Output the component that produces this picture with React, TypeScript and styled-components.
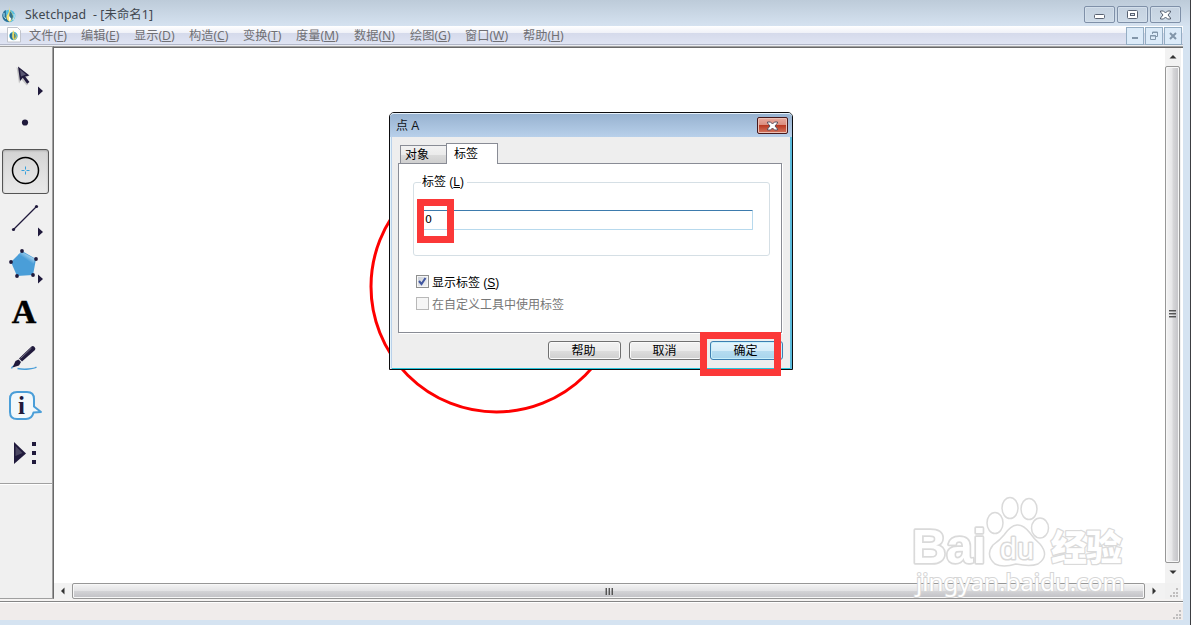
import { useState } from "react";
import type { ReactNode } from "react";
import styled, { createGlobalStyle, css } from "styled-components";

const GlobalStyle = createGlobalStyle`
  * {
    box-sizing: border-box;
  }

  body {
    margin: 0;
    overflow: hidden;
    font-family: "Liberation Sans", "Noto Sans CJK SC", sans-serif;
    font-size: 12px;
  }

  u {
    text-underline-offset: 1px;
    text-decoration-thickness: 1px;
  }
`;

const Window = styled.div`
  width: 1191px;
  height: 625px;
  display: flex;
  flex-direction: column;
  background: #d5e3f1;
  border-right: 1px solid #3c3e42;
`;

const TitleBar = styled.header`
  height: 26px;
  flex: none;
  display: flex;
  align-items: flex-start;
  padding: 6px 9px 0 1px;
  background: linear-gradient(#bdcbd9, #d5e2f0);
`;

const Title = styled.h1`
  flex: 1;
  margin: 0 0 0 8px;
  font: 12.3px/17px "Noto Sans", "Noto Sans CJK SC", sans-serif;
  letter-spacing: 0.12px;
  white-space: pre;
  color: #3f464e;
`;

const WindowButtons = styled.div`
  display: flex;
  gap: 2px;
`;

const WindowButton = styled.button`
  width: 31px;
  height: 17px;
  padding: 0;
  display: grid;
  place-items: center;
  border: 1px solid #7f90a8;
  border-radius: 2px;
  background: linear-gradient(#c5d2e0, #cddae7);
  box-shadow: inset 0 0 0 1px #d3dfeb;
`;

const MenuBar = styled.nav`
  width: 1183px;
  height: 19px;
  flex: none;
  display: flex;
  align-items: flex-start;
  padding: 1px 1px 0 7px;
  border-bottom: 1px solid #b2b7c8;
  background: linear-gradient(#fff 0, #eff1f8 7px, #d5daeb 7px, #dfe4f3 18px);
`;

const MenuItems = styled.div`
  flex: 1;
  display: flex;
  margin-left: 8px;
`;

const MenuItem = styled.span<{ $width: number }>`
  width: ${({ $width }) => $width}px;
  font: 12.2px/17px "Noto Sans", "Noto Sans CJK SC", sans-serif;
  white-space: nowrap;
  color: #707074;
`;

const DocButtons = styled.div`
  display: flex;
  gap: 1px;
`;

const DocButton = styled.button`
  width: 18px;
  height: 18px;
  padding: 0;
  display: grid;
  place-items: center;
  border: 1px solid #94adc3;
  background: #dcebf9;
`;

const Main = styled.div`
  width: 1183px;
  height: 554px;
  flex: none;
  display: flex;
  border-top: 1px solid #eceef2;
  background: #f0f0f0;
`;

const Toolbar = styled.aside`
  width: 54px;
  flex: none;
  display: flex;
  flex-direction: column;
  border-top: 1px solid #a0a0a0;
  border-right: 1px solid #696969;
  border-bottom: 1px solid #a0a0a0;
  height: 553px;
  box-shadow: inset -1px 0 #a0a0a0;
`;

const ToolList = styled.div`
  padding: 8px 0 0 2px;
  height: 437px;
  margin-right: 1px;
  border-bottom: 1px solid #a0a0a0;
  box-shadow: 0 1px #fff;
`;

const Tool = styled.button<{ $active?: boolean }>`
  display: block;
  width: 47px;
  height: 47px;
  padding: 0;
  border: 0;
  background: none;
  ${({ $active }) =>
    $active &&
    css`
      height: 45px;
      margin-bottom: 2px;
      border: 1px solid #555;
      border-radius: 3px;
      background: linear-gradient(#d3d3d3, #dedede 45%, #e9e9e9);
      box-shadow: inset 0 1px 2px #aaa;

      svg {
        margin: -2px 0 0 -1px;
      }
    `}

  svg {
    display: block;
  }
`;

const Document = styled.main`
  flex: 1;
  display: grid;
  grid-template: 535px 16px / 1111px 16px;
  height: 553px;
  border-top: 1px solid #a0a0a0;
  box-shadow: inset 0 1px #696969;
  padding-top: 1px;
  background: #fff;
`;

const Canvas = styled.section`
  position: relative;
  background: #fff;
`;

const Drawing = styled.svg`
  display: block;
`;

const Scrollbar = styled.div<{ $vertical?: boolean }>`
  display: flex;
  flex-direction: ${({ $vertical }) => ($vertical ? "column" : "row")};
  background: #f2f2f2;
`;

const Arrow = styled.div<{ $vertical?: boolean }>`
  width: ${({ $vertical }) => ($vertical ? 16 : 18)}px;
  height: ${({ $vertical }) => ($vertical ? 18 : 16)}px;
  flex: none;
  display: grid;
  place-items: center;
`;

const Thumb = styled.div<{ $vertical?: boolean }>`
  flex: none;
  display: grid;
  place-items: center;
  border: 1px solid #979797;
  border-radius: 2px;
  box-shadow: inset 0 0 0 1px #f7f7f7;
  ${({ $vertical }) =>
    $vertical
      ? css`
          width: 15px;
          height: 497px;
          background: linear-gradient(90deg, #f4f4f4, #e6e6e8 48%, #d8d8da 52%, #c2c2c6);
        `
      : css`
          width: 1073px;
          height: 16px;
          background: linear-gradient(#f4f4f4, #e3e3e5 48%, #d3d3d6 52%, #c0c0c4);
        `}
`;

const GripCorner = styled.div`
  display: flex;
  align-items: flex-end;
  justify-content: flex-end;
  padding: 0 2px 1px 0;
  background: #f0f0f0;
`;

const StatusBar = styled.footer`
  width: 1183px;
  height: 21px;
  flex: none;
  display: flex;
  justify-content: flex-end;
  align-items: flex-end;
  padding: 0 1px;
  background: #f0eceb;
  border-top: 2px solid #f5f3f2;
  box-shadow: inset 0 1px #858585, inset 0 2px #fff;
`;

// The dialog floats over the drawing.
const Dialog = styled.div`
  position: absolute;
  left: 335px;
  top: 64px;
  width: 404px;
  height: 258px;
  display: flex;
  flex-direction: column;
  border: 1px solid #0d0d0f;
  border-radius: 5px 5px 0 0;
  background: #eee;
  box-shadow: inset 1px 0 #e4f3fb, inset 2px 0 #b9d1ea, inset -2px 0 #5bbbdc,
    inset 0 -1px #28c4da;
`;

const DialogTitle = styled.div`
  height: 24px;
  flex: none;
  display: flex;
  justify-content: space-between;
  padding: 4px 4px 0 6px;
  border-top: 1px solid #e7f2fb;
  border-radius: 4px 4px 0 0;
  background: linear-gradient(#97b2d0, #b8d0ea);
  line-height: 17px;
  color: #101418;
`;

const CloseButton = styled.button`
  width: 31px;
  height: 17px;
  padding: 0;
  margin-top: -1px;
  display: grid;
  place-items: center;
  border: 1px solid #47191c;
  border-radius: 2px;
  background: linear-gradient(#e8aa9e, #da8c7d 48%, #ba3a22 50%, #d37660);
  box-shadow: inset 0 0 0 1px #ecc0b5;
`;

const Tabs = styled.div`
  display: flex;
  align-items: flex-end;
  height: 26px;
  padding-left: 10px;
  flex: none;
`;

const Tab = styled.button<{ $active?: boolean }>`
  width: 46px;
  height: 18px;
  padding: 0 0 0 4px;
  border: 1px solid #898c95;
  border-right: 0;
  border-bottom: 0;
  background: linear-gradient(#f2f2f2, #ebebeb 50%, #dadada 55%, #cfcfcf);
  font: 12px/18px "Liberation Sans", "Noto Sans CJK SC", sans-serif;
  text-align: left;
  color: #000;
  ${({ $active }) =>
    $active &&
    css`
      position: relative;
      z-index: 1;
      width: 52px;
      height: 21px;
      margin-bottom: -1px;
      padding: 0 0 1px 7px;
      border-right: 1px solid #898c95;
      background: #fff;
    `}
`;

const Panel = styled.div`
  width: 384px;
  height: 170px;
  margin-left: 8px;
  flex: none;
  border: 1px solid #898c95;
  background: #fff;
  padding: 9px 11px 0 14px;
  box-shadow: 1px 1px #fff;
`;

const Group = styled.fieldset`
  width: 357px;
  height: 83px;
  margin: 0;
  padding: 18px 16px 0 7px;
  border: 1px solid #d5dfe5;
  border-radius: 3px;
`;

const Legend = styled.legend`
  height: 18px;
  margin-bottom: -18px;
  padding: 0 3px 0 1px;
  line-height: 19px;
`;

const LabelInput = styled.input`
  display: block;
  width: 332px;
  height: 20px;
  margin-top: 18px;
  padding: 0 0 1px 3px;
  border: 1px solid #b7d9ed;
  border-top-color: #3d7bad;
  border-radius: 1px;
  font: 11px "DejaVu Sans", sans-serif;
  outline: none;
`;

const CheckRow = styled.label<{ $disabled?: boolean }>`
  height: 22px;
  display: flex;
  align-items: center;
  gap: 3px;
  margin-left: 3px;
  white-space: nowrap;
  color: ${({ $disabled }) => ($disabled ? "#777" : "#000")};
`;

const CheckBox = styled.span<{ $disabled?: boolean }>`
  width: 13px;
  height: 13px;
  display: grid;
  place-items: center;
  border: 1px solid ${({ $disabled }) => ($disabled ? "#b8b8b8" : "#8e8f8f")};
  background: ${({ $disabled }) =>
    $disabled ? "#f6f6f6" : "linear-gradient(135deg, #c9ced6, #f6f6f6)"};
  box-shadow: inset 0 0 0 1px #f6f6f6;
`;

const CheckRows = styled.div`
  margin-top: 14px;
`;

const Actions = styled.div`
  display: flex;
  gap: 8px;
  padding: 8px 0 0 158px;
`;

const ActionButton = styled.button<{ $primary?: boolean }>`
  width: 73px;
  height: 19px;
  padding: 0 2px 0 0;
  border: 1px solid ${({ $primary }) => ($primary ? "#3c7fb1" : "#707070")};
  border-radius: 3px;
  background: ${({ $primary }) =>
    $primary
      ? "linear-gradient(#e6f4fc, #d5edf9 50%, #b5dcf0 52%, #a8d5ec)"
      : "linear-gradient(#f2f2f2, #ebebeb 50%, #dddddd 52%, #cfcfcf)"};
  box-shadow: inset 0 0 0 1px ${({ $primary }) => ($primary ? "#c8f0fb" : "#fafafa")};
  font: 12px/16px "Liberation Sans", "Noto Sans CJK SC", sans-serif;
  color: #000;
`;

const Highlight = styled.div<{ $x: number; $y: number; $w: number }>`
  position: absolute;
  left: ${({ $x }) => $x}px;
  top: ${({ $y }) => $y}px;
  width: ${({ $w }) => $w}px;
  height: 44px;
  border: 7px solid #fb3838;
  pointer-events: none;
`;

const Watermark = styled.svg`
  position: absolute;
  left: 855px;
  top: 444px;
  z-index: 2;
  overflow: visible;
  pointer-events: none;
`;

const menus = [
  { name: "文件", key: "F", width: 52 },
  { name: "编辑", key: "E", width: 53 },
  { name: "显示", key: "D", width: 55 },
  { name: "构造", key: "C", width: 54 },
  { name: "变换", key: "T", width: 53 },
  { name: "度量", key: "M", width: 58 },
  { name: "数据", key: "N", width: 56 },
  { name: "绘图", key: "G", width: 55 },
  { name: "窗口", key: "W", width: 58 },
  { name: "帮助", key: "H", width: 45 },
];

const ink = "#201a3c";
const blue = "#4a9ed8";

const AppIcon = () => (
  <svg width="16" height="17" viewBox="0 0 16 17">
    <circle cx="8" cy="10" r="6.300" fill="#58bfe0" />
    <path d="M3 5Q-1 11 4 15Q8 17 10 15Q4 12 5 4Z" fill="#2b6f96" />
    <path d="M8 0Q8 4 11 7Q14 12 9 16Q5 14 5.500 10Q9 6 8 0Z" fill="#f3e27a" />
    <path d="M9 5Q14 10 10.500 14Q7 13 9 5Z" fill="#35748c" />
    <path d="M8 10l2.500 3L8 15Z" fill="#fff" />
    <path d="M3 7Q2 11 5 13" fill="none" stroke="#b5e8f4" />
    <path d="M13 8Q14 11 12 14" fill="none" stroke="#c8eef6" />
  </svg>
);

const DocIcon = () => (
  <svg width="14" height="16" viewBox="0 0 14 16">
    <path d="M.5.5h10l3 3v11.500H.5Z" fill="#fff" stroke="#c1c4cc" />
    <circle cx="6.500" cy="9" r="4.200" fill="#4fb2d2" />
    <path d="M6 3Q7 6 9 8Q11 11 7 13Q4 12 6 3Z" fill="#ead65a" />
    <path d="M7 6Q10 9 7.500 12Z" fill="#2f7190" />
    <path d="M3 7Q2 11 6 13Q4 10 5 6Z" fill="#2b6a90" />
  </svg>
);

const Flyout = () => <path d="M36 31.500l5 4.500-5 4.500Z" fill={ink} />;

const ToolIcon = ({ children }: { children: ReactNode }) => (
  <svg width="47" height="47" viewBox="0 0 47 47" overflow="visible">
    {children}
  </svg>
);

const tools = [
  {
    name: "arrow",
    icon: (
      <>
        <path
          d="M14.500 12l12 10-4 1 4 6-2 1.500-5-6-2.500 4Z"
          fill="#777"
          opacity=".35"
        />
        <path d="M16 11.500l11.500 9-4.300 1 4.300 5.500-2.400 1.800-4.300-6-2.800 3.200Z" fill={ink} />
        <path d="M18 14.500l6 5-2.500 1-2.500 1Z" fill="#595772" />
        <Flyout />
      </>
    ),
  },
  { name: "point", icon: <circle cx="23" cy="20.500" r="3.100" fill={ink} /> },
  {
    name: "compass",
    icon: (
      <>
        <circle cx="23.500" cy="22.500" r="13" fill="none" stroke="#000" strokeWidth="1.500" />
        <path d="M19.500 22.500h3m2 0h3M23.500 18.500v3m0 2v3" stroke="#35a0dc" />
      </>
    ),
  },
  {
    name: "line",
    icon: (
      <>
        <path d="M11.500 33.500l23-23" stroke={ink} strokeWidth="1.200" />
        <circle cx="11.500" cy="33.500" r="1.600" fill={ink} />
        <circle cx="34.500" cy="10.500" r="1.600" fill={ink} />
        <Flyout />
      </>
    ),
  },
  {
    name: "polygon",
    icon: (
      <>
        <defs>
          <linearGradient id="shine" x1="0.35" y1="0.6" x2="0.75" y2="0.1">
            <stop offset="0.2" stopColor={blue} />
            <stop offset="1" stopColor="#cfe9f7" />
          </linearGradient>
        </defs>
        <path d="M20 8l14 8-3 16-16 1-6-14Z" fill={blue} />
        <path d="M20 9l13 7-2 7Q27 17 16 12Z" fill="url(#shine)" />
        {[
          [20, 8],
          [34, 16],
          [31, 32],
          [15, 33],
          [9, 19],
        ].map(([x, y]) => (
          <circle key={x} cx={x} cy={y} r="1.900" fill={ink} />
        ))}
        <Flyout />
      </>
    ),
  },
  {
    name: "text",
    icon: (
      <text
        x="22"
        y="32.500"
        textAnchor="middle"
        fontFamily="Liberation Serif"
        fontWeight="bold"
        fontSize="34"
        stroke="#000"
        strokeWidth=".5"
      >
        A
      </text>
    ),
  },
  {
    name: "marker",
    icon: (
      <>
        <path
          d="M9.500 31.500q1-3 3-2m3 2q5 1 11 .5t8-2"
          fill="none"
          stroke={blue}
          strokeWidth="1.500"
        />
        <path d="M10.500 30.500l3-6.500 3-1.500 2.500 2.500-2 3.500Z" fill={ink} />
        <path d="M17 21.500L29.500 9.500q1.500-1 3 .5t.5 3L20 24.500Z" fill={ink} />
        <path d="M18.500 21.500l11-10.500" stroke="#777486" />
      </>
    ),
  },
  {
    name: "information",
    icon: (
      <>
        <path
          d="M15 8h10q7 0 7 7v7.500l7 5.500-7.500.5Q30 35 24 35h-9q-7 0-7-7V15q0-7 7-7Z"
          fill="#f2f8fb"
          stroke={blue}
          strokeWidth="2"
          strokeLinejoin="round"
        />
        <text
          x="19.500"
          y="29.500"
          textAnchor="middle"
          fontFamily="Liberation Serif"
          fontWeight="bold"
          fontSize="25"
          fill={ink}
        >
          i
        </text>
      </>
    ),
  },
  {
    name: "custom",
    icon: (
      <>
        <path d="M12 11l12 11.500L12 33Z" fill={ink} />
        <path d="M13.500 15l7 7-7 3Z" fill="#5d5a70" opacity=".7" />
        <path d="M30 11h4v4h-4zm0 9h4v4h-4zm0 9h4v4h-4z" fill={ink} />
      </>
    ),
  },
];

const Cross = ({ outline = "#566070", fill = "#fff" }) => (
  <svg width="13" height="10" viewBox="0 0 13 10">
    <path
      d="M1.500 1h3l2 2 2-2h3v1L9 5l2.500 3v1h-3l-2-2-2 2h-3V8L4 5 1.500 2Z"
      fill={fill}
      stroke={outline}
    />
  </svg>
);

const SizeGrip = () => (
  <svg width="10" height="10" viewBox="0 0 10 10">
    <path
      d="M7 0h2v2H7zM4 4h2v2H4zM7 4h2v2H7zM1 7h2v2H1zM4 7h2v2H4zM7 7h2v2H7z"
      fill="#c0bebe"
    />
  </svg>
);

const ArrowGlyph = ({ angle }: { angle: number }) => (
  <svg width="8" height="8" viewBox="0 0 8 8">
    <path d="M.5 5.500L4 2l3.500 3.500Z" fill="#333" transform={`rotate(${angle} 4 4)`} />
  </svg>
);

const Grip = ({ angle }: { angle: number }) => (
  <svg width="9" height="9" viewBox="0 0 9 9">
    <g transform={`rotate(${angle} 4.500 4.500)`} fill="#555">
      <path d="M1 0h7v1H1zM1 3h7v1H1zM1 6h7v1H1z" />
      <path d="M1 1h7v1H1zM1 4h7v1H1zM1 7h7v1H1z" opacity=".45" />
    </g>
  </svg>
);

const App = () => {
  const [activeTool, setActiveTool] = useState("compass");
  const [label, setLabel] = useState("0");

  return (
    <Window>
      <GlobalStyle />
      <TitleBar>
        <AppIcon />
        <Title>{"Sketchpad  - [未命名1]"}</Title>
        <WindowButtons>
          <WindowButton>
            <svg width="13" height="9" viewBox="0 0 13 9">
              <rect x="1.500" y="4.500" width="10" height="4" rx="1" fill="#fff" stroke="#596272" />
            </svg>
          </WindowButton>
          <WindowButton>
            <svg width="11" height="10" viewBox="0 0 11 10">
              <rect x=".5" y=".5" width="10" height="8" rx="1" fill="#fff" stroke="#596272" />
              <rect x="3.500" y="3.500" width="4" height="2" fill="#dce5ef" stroke="#596272" />
            </svg>
          </WindowButton>
          <WindowButton>
            <Cross />
          </WindowButton>
        </WindowButtons>
      </TitleBar>
      <MenuBar>
        <DocIcon />
        <MenuItems>
          {menus.map(({ name, key, width }) => (
            <MenuItem key={key} $width={width}>
              {name}(<u>{key}</u>)
            </MenuItem>
          ))}
        </MenuItems>
        <DocButtons>
          <DocButton>
            <svg width="8" height="8" viewBox="0 0 8 8">
              <path d="M1 5h6v2H1z" fill="#8296aa" />
            </svg>
          </DocButton>
          <DocButton>
            <svg width="10" height="10" viewBox="0 0 10 10" fill="none" stroke="#8296aa">
              <path d="M3.500 3V1h5v4.500H7M3 1.500h6M1.500 4.500h5v4h-5ZM1 5h6" />
            </svg>
          </DocButton>
          <DocButton>
            <svg width="8" height="8" viewBox="0 0 8 8">
              <path d="M1 1l6 6M7 1L1 7" stroke="#8296aa" strokeWidth="2" />
            </svg>
          </DocButton>
        </DocButtons>
      </MenuBar>
      <Main>
        <Toolbar>
          <ToolList>
            {tools.map(({ name, icon }) => (
              <Tool
                key={name}
                aria-label={name}
                $active={name === activeTool}
                onClick={() => setActiveTool(name)}
              >
                <ToolIcon>{icon}</ToolIcon>
              </Tool>
            ))}
          </ToolList>
        </Toolbar>
        <Document>
          <Canvas>
            <Drawing width="1111" height="535">
              <circle
                cx="442.500"
                cy="238.500"
                r="125.500"
                fill="none"
                stroke="#fe0000"
                strokeWidth="3"
              />
            </Drawing>
            <Dialog>
              <DialogTitle>
                点 A
                <CloseButton>
                  <Cross outline="#5a5260" />
                </CloseButton>
              </DialogTitle>
              <Tabs>
                <Tab>对象</Tab>
                <Tab $active>标签</Tab>
              </Tabs>
              <Panel>
                <Group>
                  <Legend>
                    标签 (<u>L</u>)
                  </Legend>
                  <LabelInput value={label} onChange={(e) => setLabel(e.target.value)} />
                </Group>
                <CheckRows>
                  <CheckRow>
                    <CheckBox>
                      <svg width="9" height="9" viewBox="0 0 9 9">
                        <path d="M1 4l2.500 3L7.500 1" fill="none" stroke="#4056a0" strokeWidth="2" />
                      </svg>
                    </CheckBox>
                    <span>
                      显示标签 (<u>S</u>)
                    </span>
                  </CheckRow>
                  <CheckRow $disabled>
                    <CheckBox $disabled />
                    <span>在自定义工具中使用标签</span>
                  </CheckRow>
                </CheckRows>
              </Panel>
              <Actions>
                <ActionButton>帮助</ActionButton>
                <ActionButton>取消</ActionButton>
                <ActionButton $primary>确定</ActionButton>
              </Actions>
            </Dialog>
            <Highlight $x={363} $y={151} $w={37} />
            <Highlight $x={646} $y={284} $w={81} />
            <Watermark width="220" height="110" viewBox="0 0 220 110">
              <g fill="#fff" stroke="#dadada" strokeWidth="1.500" strokeLinejoin="round">
                <text
                  x="3"
                  y="71"
                  fontFamily="Liberation Sans"
                  fontWeight="bold"
                  fontSize="49"
                  textLength="74"
                  lengthAdjust="spacingAndGlyphs"
                  stroke="#dadada"
                  strokeWidth="3.500"
                  paintOrder="stroke"
                >
                  Bai
                </text>
                <ellipse cx="86" cy="31" rx="8" ry="10.500" />
                <ellipse cx="101" cy="16" rx="8" ry="10.500" />
                <ellipse cx="120" cy="17" rx="8" ry="10.500" />
                <ellipse cx="131" cy="36" rx="8.500" ry="10" />
                <path d="M95 43Q108 24 121 41Q125 47 131 52Q141 64 129 72Q121 75 107 72Q94 76 86 72Q76 63 84 53Q91 48 95 43Z" />
                <text
                  x="91"
                  y="67"
                  fontFamily="Liberation Sans"
                  fontSize="30"
                  textLength="34"
                  strokeWidth="3"
                  paintOrder="stroke"
                >
                  du
                </text>
                <text
                  x="142"
                  y="69"
                  fontFamily="Noto Sans CJK SC"
                  fontWeight="900"
                  fontSize="36"
                  textLength="71"
                  strokeWidth="2.500"
                  paintOrder="stroke"
                >
                  经验
                </text>
              </g>
              <text
                x="7"
                y="99"
                fontFamily="Noto Sans"
                fontSize="24"
                textLength="209"
                fill="#fff"
                stroke="#d6d6d6"
                strokeWidth="2"
                paintOrder="stroke"
              >
                jingyan.baidu.com
              </text>
            </Watermark>
          </Canvas>
          <Scrollbar $vertical>
            <Arrow $vertical>
              <ArrowGlyph angle={0} />
            </Arrow>
            <Thumb $vertical>
              <Grip angle={0} />
            </Thumb>
            <Arrow $vertical>
              <ArrowGlyph angle={180} />
            </Arrow>
          </Scrollbar>
          <Scrollbar>
            <Arrow>
              <ArrowGlyph angle={270} />
            </Arrow>
            <Thumb>
              <Grip angle={90} />
            </Thumb>
            <Arrow>
              <ArrowGlyph angle={90} />
            </Arrow>
          </Scrollbar>
          <GripCorner>
            <SizeGrip />
          </GripCorner>
        </Document>
      </Main>
      <StatusBar>
        <SizeGrip />
      </StatusBar>
    </Window>
  );
};

export default App;
